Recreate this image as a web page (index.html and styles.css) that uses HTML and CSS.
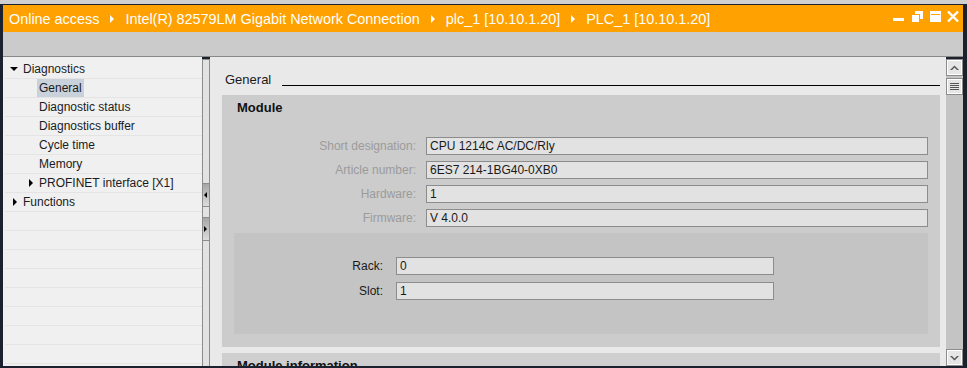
FILE: index.html
```html
<!DOCTYPE html>
<html>
<head>
<meta charset="utf-8">
<link rel="stylesheet" href="styles.css">
</head>
<body>
<div class="screen">
  <div class="topstrip"></div>
  <div class="window">
    <div class="titlebar">
      <div class="crumbs">
        <span>Online access</span><i class="sep"></i>
        <span>Intel(R) 82579LM Gigabit Network Connection</span><i class="sep"></i>
        <span>plc_1 [10.10.1.20]</span><i class="sep"></i>
        <span>PLC_1 [10.10.1.20]</span>
      </div>
      <svg class="winctl" width="66" height="27" viewBox="0 0 66 27">
        <rect x="0" y="13" width="11" height="3" fill="#fff"/>
        <rect x="22" y="6" width="8" height="8" fill="#fff"/>
        <rect x="18.5" y="9.5" width="8" height="8" fill="#fff" stroke="#ffa100" stroke-width="1"/>
        <rect x="37" y="6" width="11" height="11" fill="#fff"/>
        <rect x="38" y="9" width="9" height="1" fill="#ffa100"/>
        <path d="M55 6.5 L65 16.5 M65 6.5 L55 16.5" stroke="#fff" stroke-width="2.4" fill="none"/>
      </svg>
    </div>
    <div class="toolbar"></div>
    <div class="main">
      <nav class="tree">
        <div class="row"><span class="tog"><i class="tri-down"></i></span><span class="lbl">Diagnostics</span></div>
        <div class="row lvl1"><span class="tog"></span><span class="lbl sel">General</span></div>
        <div class="row lvl1"><span class="tog"></span><span class="lbl">Diagnostic status</span></div>
        <div class="row lvl1"><span class="tog"></span><span class="lbl">Diagnostics buffer</span></div>
        <div class="row lvl1"><span class="tog"></span><span class="lbl">Cycle time</span></div>
        <div class="row lvl1"><span class="tog"></span><span class="lbl">Memory</span></div>
        <div class="row lvl1"><span class="tog"><i class="tri-right"></i></span><span class="lbl">PROFINET interface [X1]</span></div>
        <div class="row"><span class="tog"><i class="tri-right"></i></span><span class="lbl">Functions</span></div>
        <div class="row"></div>
        <div class="row"></div>
        <div class="row"></div>
        <div class="row"></div>
        <div class="row"></div>
        <div class="row"></div>
        <div class="row"></div>
        <div class="row"></div>
      </nav>
      <div class="splitter">
        <div class="sbtn-v"><i class="arr-left"></i></div>
        <div class="sbtn-v second"><i class="arr-right"></i></div>
      </div>
      <section class="content">
        <div class="heading"><span>General</span><span class="rule"></span></div>
        <div class="group">
          <div class="group-title">Module</div>
          <div class="fields">
            <label>Short designation:</label><div class="field">CPU 1214C AC/DC/Rly</div>
            <label>Article number:</label><div class="field">6ES7 214-1BG40-0XB0</div>
            <label>Hardware:</label><div class="field">1</div>
            <label>Firmware:</label><div class="field">V 4.0.0</div>
          </div>
          <div class="subgroup">
            <label>Rack:</label><div class="field">0</div>
            <label>Slot:</label><div class="field">1</div>
          </div>
        </div>
        <div class="group next">
          <div class="group-title">Module information</div>
        </div>
      </section>
      <div class="vscroll">
        <div class="sbtn">
          <svg width="9" height="6" viewBox="0 0 9 6"><path d="M0 5 L4.5 0.5 L9 5 L7 5 L4.5 2.5 L2 5 Z" fill="#555"/></svg>
        </div>
        <div class="sbtn second">
          <svg width="9" height="9" viewBox="0 0 9 9"><rect x="0" y="1" width="9" height="1" fill="#555"/><rect x="0" y="3" width="9" height="1" fill="#555"/><rect x="0" y="5" width="9" height="1" fill="#555"/><rect x="0" y="7" width="9" height="1" fill="#555"/></svg>
        </div>
        <div class="sbtn bottom">
          <svg width="9" height="6" viewBox="0 0 9 6"><path d="M0 1 L4.5 5.5 L9 1 L7 1 L4.5 3.5 L2 1 Z" fill="#555"/></svg>
        </div>
      </div>
    </div>
  </div>
</div>
</body>
</html>
```
FILE: styles.css
```css
html, body {
  margin: 0;
  padding: 0;
}
body {
  width: 967px;
  height: 368px;
  overflow: hidden;
  background: #1c2130;
  font-family: "Liberation Sans", Arial, sans-serif;
  font-size: 12px;
}
.screen {
  width: 967px;
  height: 368px;
  display: flex;
  flex-direction: column;
}
.topstrip {
  height: 4px;
  background: #d0d0d0;
  flex: none;
}
.window {
  flex: 1;
  margin: 1px 4px 2px 3px;
  display: flex;
  flex-direction: column;
  min-height: 0;
}
.titlebar {
  height: 27px;
  flex: none;
  background: #ffa100;
  color: #fff;
  display: flex;
  align-items: center;
  padding: 0 4px 0 6px;
}
.crumbs {
  display: flex;
  align-items: center;
  font-size: 14.4px;
  white-space: nowrap;
}
.sep {
  display: inline-block;
  width: 0;
  height: 0;
  border-top: 4px solid transparent;
  border-bottom: 4px solid transparent;
  border-left: 4px solid #fff;
  margin: 0 11px;
}
.winctl {
  margin-left: auto;
  display: block;
}
.toolbar {
  height: 24px;
  flex: none;
  background: #cbcbcb;
  border-bottom: 1px solid #888;
}
.main {
  flex: 1;
  display: flex;
  min-height: 0;
}
.tree {
  width: 199px;
  flex: none;
  background: #f0f0f0;
  padding-top: 3px;
  box-sizing: border-box;
  overflow: hidden;
  color: #1b1b22;
}
.row {
  height: 19px;
  box-sizing: border-box;
  border-bottom: 1px solid #e4e4e4;
  margin-left: 2px;
  display: flex;
  align-items: stretch;
  line-height: 18px;
  white-space: nowrap;
}
.row.lvl1 {
  padding-left: 16px;
}
.tog {
  width: 18px;
  flex: none;
  display: flex;
  align-items: center;
  justify-content: center;
}
.lbl {
  padding: 0 2px;
  margin-left: -2px;
}
.lbl.sel {
  background: #c9d1da;
}
.tri-down {
  display: block;
  width: 0;
  height: 0;
  border-left: 4px solid transparent;
  border-right: 4px solid transparent;
  border-top: 4px solid #000;
}
.tri-right {
  display: block;
  width: 0;
  height: 0;
  border-top: 4px solid transparent;
  border-bottom: 4px solid transparent;
  border-left: 4px solid #000;
  margin-left: 1px;
}
.splitter {
  width: 8px;
  flex: none;
  box-sizing: border-box;
  margin-top: 2px;
  border-left: 1px solid #8c8c8c;
  border-right: 1px solid #8c8c8c;
  border-top: 1px solid #8c8c8c;
  background: #e2e2e2;
  padding-top: 123px;
}
.sbtn-v {
  height: 24px;
  box-sizing: border-box;
  border-top: 1px solid #8c8c8c;
  border-bottom: 1px solid #8c8c8c;
  background: linear-gradient(#a6a6a6, #dcdcdc);
  display: flex;
  align-items: center;
}
.sbtn-v.second {
  margin-top: 10px;
}
.arr-left {
  display: block;
  width: 0;
  height: 0;
  border-top: 3px solid transparent;
  border-bottom: 3px solid transparent;
  border-right: 3px solid #000;
  margin-left: 1px;
}
.arr-right {
  display: block;
  width: 0;
  height: 0;
  border-top: 3px solid transparent;
  border-bottom: 3px solid transparent;
  border-left: 3px solid #000;
  margin-left: 1px;
}
.content {
  flex: 1;
  min-width: 0;
  background: #e9e9e9;
  padding: 0 6px 0 12px;
  overflow: hidden;
  color: #1a1a1a;
}
.heading {
  display: flex;
  align-items: flex-start;
  padding: 15px 0 0 3px;
  height: 38px;
  box-sizing: border-box;
  font-size: 13px;
  line-height: 16px;
}
.rule {
  flex: 1;
  height: 1px;
  background: #000;
  margin: 13px 0 0 11px;
}
.group {
  background: #cccccc;
  padding-bottom: 13px;
}
.group.next {
  margin-top: 6px;
  background: #cfcfcf;
}
.group-title {
  font-size: 13px;
  font-weight: bold;
  line-height: 20px;
  padding: 3px 15px 0;
  color: #111;
}
.fields {
  display: grid;
  grid-template-columns: 194px 1fr;
  column-gap: 10px;
  row-gap: 6px;
  margin-top: 19px;
  padding-right: 12px;
}
.fields label {
  text-align: right;
  line-height: 18px;
  color: #9b9b9b;
}
.field {
  height: 18px;
  box-sizing: border-box;
  border: 1px solid #8c8c8c;
  background: #e2e2e2;
  padding-left: 3px;
  line-height: 16px;
  color: #1a1a1a;
  white-space: nowrap;
}
.subgroup {
  margin: 6px 12px 0;
  height: 101px;
  box-sizing: border-box;
  background: #c4c4c4;
  padding-top: 24px;
  display: grid;
  grid-template-columns: 149px 378px;
  grid-auto-rows: 18px;
  column-gap: 13px;
  row-gap: 7px;
}
.subgroup label {
  text-align: right;
  line-height: 18px;
  color: #1a1a1a;
}
.vscroll {
  width: 17px;
  flex: none;
  margin-top: 2px;
  background: #c4c4c4;
  display: flex;
  flex-direction: column;
}
.sbtn {
  height: 17px;
  box-sizing: border-box;
  border: 1px solid #8c8c8c;
  box-shadow: inset 0 0 0 1px #fff;
  background: #e6e6e6;
  display: flex;
  align-items: center;
  justify-content: center;
  flex: none;
}
.sbtn.second {
  margin-top: 2px;
}
.sbtn.bottom {
  margin-top: auto;
}
```
